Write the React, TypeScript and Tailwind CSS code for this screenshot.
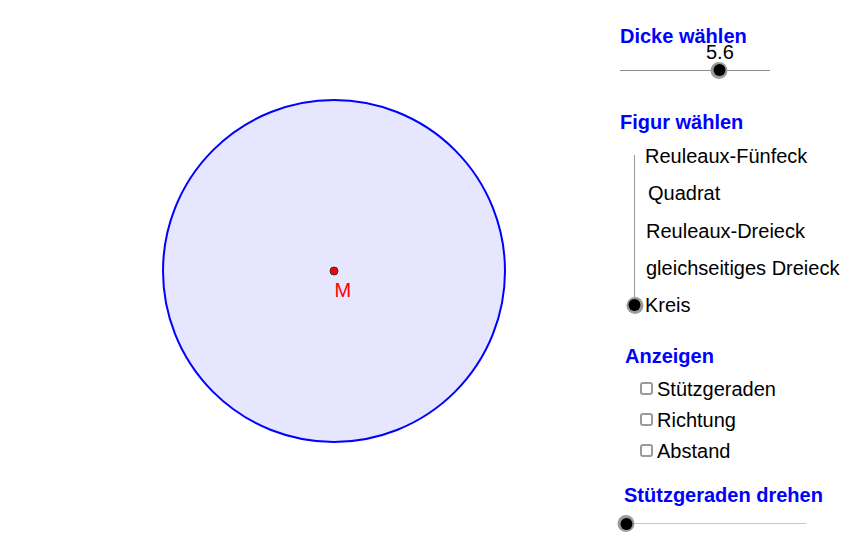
import React from "react";

const font = { fontFamily: '"Liberation Sans", Arial, sans-serif' };

function Knob() {
  return (
    <div className="flex h-[17px] w-[17px] items-center justify-center rounded-full bg-[#9a9a9a]">
      <div className="h-[12px] w-[12px] rounded-full bg-black" />
    </div>
  );
}

function HSlider({ width, pos, line }: { width: number; pos: number; line: string }) {
  return (
    <div className="relative h-[16px]" style={{ width }}>
      <div className={`absolute left-0 right-0 top-[7.5px] h-px ${line}`} />
      <div className="absolute top-[-0.5px] -translate-x-1/2" style={{ left: pos }}>
        <Knob />
      </div>
    </div>
  );
}

function Check({ label }: { label: string }) {
  return (
    <div className="flex h-[31px] items-center pl-[40px]">
      <div className="h-[13px] w-[13px] rounded-[3px] border-2 border-[#9a9a9a] bg-white" />
      <span className="ml-[4px] text-[20px] leading-[20px] text-black">{label}</span>
    </div>
  );
}

const figures = [
  { label: "Reuleaux-Fünfeck", ml: "ml-[11px]" },
  { label: "Quadrat", ml: "ml-[14px]" },
  { label: "Reuleaux-Dreieck", ml: "ml-[12px]" },
  { label: "gleichseitiges Dreieck", ml: "ml-[12px]" },
  { label: "Kreis", ml: "ml-[11px]" },
];

export default function App() {
  return (
    <div className="flex h-[547px] w-[863px] overflow-hidden bg-white" style={font}>
      <svg width="600" height="547" className="shrink-0">
        <circle cx="334" cy="271" r="171" fill="#e6e6ff" stroke="#0000ff" strokeWidth="2" />
        <circle cx="334" cy="271" r="4" fill="#ff0000" stroke="#333333" strokeWidth="1" />
        <text x="334.5" y="297" fill="#ff0000" fontSize="20" fontFamily='"Liberation Sans", Arial, sans-serif'>
          M
        </text>
      </svg>

      <div className="flex w-[263px] flex-col">
        <div className="ml-[20px] mt-[27.5px] h-[16px] text-[20px] font-bold leading-[16px] text-[#0000ff]">
          Dicke wählen
        </div>
        <div className="ml-[106px] mt-[1px] h-[14px] text-[20px] leading-[14px] text-black">5.6</div>
        <div className="ml-[20px] mt-[3.5px]">
          <HSlider width={150} pos={99} line="bg-[#8c8c8c]" />
        </div>

        <div className="ml-[20px] mt-[34px] h-[20px] text-[20px] font-bold leading-[20px] text-[#0000ff]">
          Figur wählen
        </div>
        <div className="relative ml-[34px] mt-[5.4px]">
          <div className="absolute left-0 top-[18px] bottom-[18px] w-px bg-[#999999]" />
          <div className="absolute bottom-[10px] left-[0.5px] -translate-x-1/2">
            <Knob />
          </div>
          {figures.map((f) => (
            <div key={f.label} className="flex h-[37.25px] items-center">
              <span className={`${f.ml} text-[20px] leading-[20px] text-black`}>{f.label}</span>
            </div>
          ))}
        </div>

        <div className="ml-[25px] mt-[22.3px] h-[20px] text-[20px] font-bold leading-[20px] text-[#0000ff]">
          Anzeigen
        </div>
        <div className="mt-[7.5px] flex flex-col">
          <Check label="Stützgeraden" />
          <Check label="Richtung" />
          <Check label="Abstand" />
        </div>

        <div className="ml-[24px] mt-[18.8px] h-[20px] text-[20px] font-bold leading-[20px] text-[#0000ff]">
          Stützgeraden drehen
        </div>
        <div className="ml-[26px] mt-[10.7px]">
          <HSlider width={180} pos={0} line="bg-[#c8c8c8]" />
        </div>
      </div>
    </div>
  );
}
